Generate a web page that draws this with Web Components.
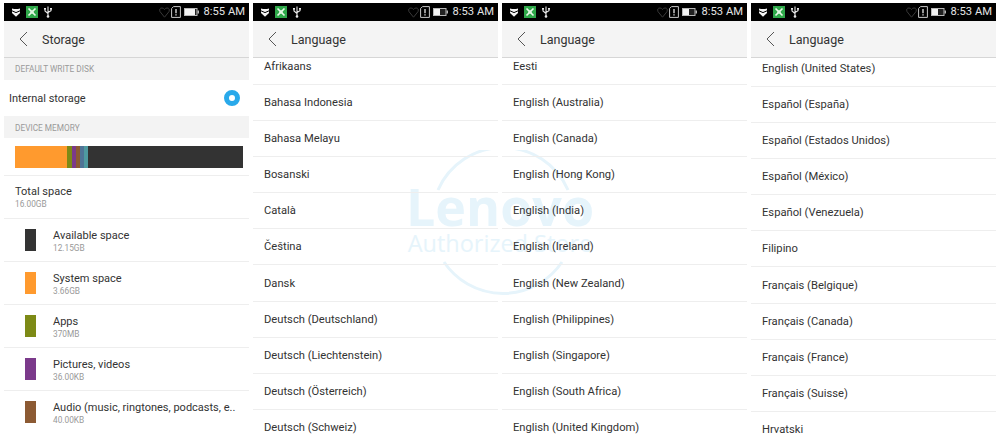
<!DOCTYPE html>
<html>
<head>
<meta charset="utf-8">
<title>Phone settings</title>
<style>
    html, body { margin: 0; height: 443px; overflow: hidden; background: #fff; }
    body { font-family: Roboto, "Noto Sans", sans-serif; color: #333; }
</style>
</head>
<body>
<x-gallery>
    <x-phone time="8:55 AM" heading="Storage" battery="10">
        <x-section-label>DEFAULT WRITE DISK</x-section-label>
        <x-radio-row>Internal storage</x-radio-row>
        <x-section-label style="padding-top: 2px; height: 20px">DEVICE MEMORY</x-section-label>
        <x-memory-bar></x-memory-bar>
        <x-total-row size="16.00GB">Total space</x-total-row>
        <x-storage-row size="12.15GB" color="#333333">Available space</x-storage-row>
        <x-storage-row size="3.66GB" color="#ff9a2e">System space</x-storage-row>
        <x-storage-row size="370MB" color="#7d8a16">Apps</x-storage-row>
        <x-storage-row size="36.00KB" color="#7b3a8b">Pictures, videos</x-storage-row>
        <x-storage-row size="40.00KB" color="#8c5a33">Audio (music, ringtones, podcasts, e..</x-storage-row>
    </x-phone>
    <x-phone time="8:53 AM" heading="Language" battery="6">
        <x-lang-list style="--scroll: -9.1px">
            <x-lang-row>Afrikaans</x-lang-row>
            <x-lang-row>Bahasa Indonesia</x-lang-row>
            <x-lang-row>Bahasa Melayu</x-lang-row>
            <x-lang-row>Bosanski</x-lang-row>
            <x-lang-row>Català</x-lang-row>
            <x-lang-row>Čeština</x-lang-row>
            <x-lang-row>Dansk</x-lang-row>
            <x-lang-row>Deutsch (Deutschland)</x-lang-row>
            <x-lang-row>Deutsch (Liechtenstein)</x-lang-row>
            <x-lang-row>Deutsch (Österreich)</x-lang-row>
            <x-lang-row>Deutsch (Schweiz)</x-lang-row>
        </x-lang-list>
    </x-phone>
    <x-phone time="8:53 AM" heading="Language" battery="6">
        <x-lang-list style="--scroll: -9.1px">
            <x-lang-row>Eesti</x-lang-row>
            <x-lang-row>English (Australia)</x-lang-row>
            <x-lang-row>English (Canada)</x-lang-row>
            <x-lang-row>English (Hong Kong)</x-lang-row>
            <x-lang-row>English (India)</x-lang-row>
            <x-lang-row>English (Ireland)</x-lang-row>
            <x-lang-row>English (New Zealand)</x-lang-row>
            <x-lang-row>English (Philippines)</x-lang-row>
            <x-lang-row>English (Singapore)</x-lang-row>
            <x-lang-row>English (South Africa)</x-lang-row>
            <x-lang-row>English (United Kingdom)</x-lang-row>
        </x-lang-list>
    </x-phone>
    <x-phone time="8:53 AM" heading="Language" battery="6">
        <x-lang-list style="--scroll: -7.1px">
            <x-lang-row>English (United States)</x-lang-row>
            <x-lang-row>Español (España)</x-lang-row>
            <x-lang-row>Español (Estados Unidos)</x-lang-row>
            <x-lang-row>Español (México)</x-lang-row>
            <x-lang-row>Español (Venezuela)</x-lang-row>
            <x-lang-row>Filipino</x-lang-row>
            <x-lang-row>Français (Belgique)</x-lang-row>
            <x-lang-row>Français (Canada)</x-lang-row>
            <x-lang-row>Français (France)</x-lang-row>
            <x-lang-row>Français (Suisse)</x-lang-row>
            <x-lang-row>Hrvatski</x-lang-row>
        </x-lang-list>
    </x-phone>
    <x-watermark></x-watermark>
</x-gallery>

<script>
    // small helper, every element here is just a shadow root with static markup
    class Base extends HTMLElement {
        constructor() {
            super();
            this.attachShadow({ mode: 'open' });
            this.shadowRoot.innerHTML = this.markup;
        }
    }

    customElements.define('x-gallery', class extends Base {
        get markup() {
            return /*html*/ `
            <style>
                :host { display: flex; gap: 4px; padding: 3px 0 0 4px; height: 440px; position: relative; overflow: hidden; background: #fff; }
            </style>
            <slot></slot>`;
        }
    });

    customElements.define('x-status-bar', class extends Base {
        update(time, battery) {
            this.shadowRoot.querySelector('.time').textContent = time;
            this.shadowRoot.querySelector('.level').setAttribute('width', battery);
        }
        get markup() {
            return /*html*/ `
            <style>
                :host { display: flex; align-items: center; height: 18px; background: #000; padding: 0 4px 0 8px; box-sizing: border-box; }
                svg { display: block; }
                .left { display: flex; align-items: center; gap: 6px; }
                .right { display: flex; align-items: center; margin-left: auto; }
                .time { color: #e4e4e4; font-size: 11.2px; margin-left: 5px; line-height: 18px; }
            </style>
            <div class="left">
                <svg width="8" height="9" viewBox="0 0 8 9"><path d="M0 0.4 Q4 1.6 8 0.4 V5 L4 8.8 L0 5Z" fill="#f4f4f4"/><path d="M0 2.8 L4 4.6 L8 2.8" fill="none" stroke="#000" stroke-width="1"/></svg>
                <svg width="12" height="12" viewBox="0 0 12 12"><rect width="12" height="12" fill="#2fa84a"/><path d="M2.5 2.5 L5 5 H7 L9.5 2.5 M2.5 9.5 L5 7 H7 L9.5 9.5 M5 5 V7 M7 5 V7" fill="none" stroke="#e8f8e8" stroke-width="1.7"/></svg>
                <svg width="8" height="12" viewBox="0 0 8 12"><path d="M4 0.5 V10.5 M1 3 V5 L4 7.5 M7 3 V4.6 L4 6.5" fill="none" stroke="#e8e8e8" stroke-width="1.1"/><circle cx="4" cy="10.5" r="1.3" fill="#e8e8e8"/><rect x="0" y="2" width="2" height="1.6" fill="#e8e8e8"/><rect x="6" y="2" width="2" height="1.6" fill="#e8e8e8"/></svg>
            </div>
            <div class="right">
                <svg width="11" height="11" viewBox="0 0 11 11" style="margin-right:1px"><path d="M5.5 10.2 L1 4.6 Q-0.2 1 3 1 Q4.8 1 5.5 2.6 Q6.2 1 8 1 Q11.2 1 10 4.6Z" fill="none" stroke="#383838" stroke-width="1"/></svg>
                <svg width="10" height="12" viewBox="0 0 10 12" style="margin-right:3px"><path d="M2.5 0.6 H9.4 V11.4 H0.6 V2.5Z" fill="none" stroke="#c8c8c8" stroke-width="1"/><path d="M5 3 V7.2 M5 8.2 V9.4" stroke="#e8e8e8" stroke-width="1.3"/></svg>
                <svg width="15" height="8" viewBox="0 0 15 8"><rect x="0.5" y="0.5" width="12.5" height="7" fill="#222" stroke="#b8b8b8"/><rect class="level" x="1" y="1" width="6" height="6" fill="#f4f4f4"/><rect x="13.5" y="2.5" width="1.5" height="3" fill="#b8b8b8"/></svg>
                <span class="time"></span>
            </div>`;
        }
    });

    customElements.define('x-app-header', class extends Base {
        update(heading) {
            this.shadowRoot.querySelector('.title').textContent = heading;
        }
        get markup() {
            return /*html*/ `
            <style>
                :host { display: flex; align-items: center; height: 37px; background: #f4f4f4; border-bottom: 1px solid #d6d6d6; box-sizing: border-box; padding-left: 15px; }
                svg { display: block; }
                .title { font-size: 12.5px; color: #333; margin-left: 14px; }
            </style>
            <svg width="9" height="16" viewBox="0 0 9 16"><path d="M8 1 L1 8 L8 15" fill="none" stroke="#555" stroke-width="1"/></svg>
            <span class="title"></span>`;
        }
    });

    customElements.define('x-phone', class extends Base {
        connectedCallback() {
            this.shadowRoot.querySelector('x-status-bar').update(this.getAttribute('time'), this.getAttribute('battery'));
            this.shadowRoot.querySelector('x-app-header').update(this.getAttribute('heading'));
        }
        get markup() {
            return /*html*/ `
            <style>
                :host { display: flex; flex-direction: column; flex: 0 0 245px; width: 245px; overflow: hidden; position: relative; z-index: 1; }
                .body { flex: 1; overflow: hidden; }
            </style>
            <x-status-bar></x-status-bar>
            <x-app-header></x-app-header>
            <div class="body"><slot></slot></div>`;
        }
    });

    customElements.define('x-section-label', class extends Base {
        get markup() {
            return /*html*/ `
            <style>
                :host { display: flex; align-items: center; height: 22px; background: #f3f3f3; padding-left: 11px; font-size: 8.3px; color: #9a9a9a; }
            </style>
            <slot></slot>`;
        }
    });

    customElements.define('x-radio-row', class extends Base {
        get markup() {
            return /*html*/ `
            <style>
                :host { display: flex; align-items: center; justify-content: space-between; height: 36px; padding: 0 9px 0 5px; font-size: 11px; color: #333; }
                i { display: block; width: 6px; height: 6px; border: 5px solid #29a9ea; border-radius: 50%; background: #fff; }
            </style>
            <span><slot></slot></span><i></i>`;
        }
    });

    customElements.define('x-memory-bar', class extends Base {
        get markup() {
            return /*html*/ `
            <style>
                :host { display: flex; height: 22px; margin: 8px 6px 7px 11px; }
                i { display: block; flex: none; }
            </style>
            <i style="width:52px;background:#ff9a2e"></i>
            <i style="width:5px;background:#7d8a16"></i>
            <i style="width:4px;background:#7b3a8b"></i>
            <i style="width:4px;background:#8c5a33"></i>
            <i style="width:4px;background:#4f7496"></i>
            <i style="width:4px;background:#4e9aa0"></i>
            <i style="flex:1;background:#333"></i>`;
        }
    });

    customElements.define('x-total-row', class extends Base {
        connectedCallback() {
            this.shadowRoot.querySelector('small').textContent = this.getAttribute('size');
        }
        get markup() {
            return /*html*/ `
            <style>
                :host { display: flex; flex-direction: column; justify-content: center; height: 42px; padding-left: 11px; border-top: 1px solid #eee; font-size: 11px; color: #333; }
                small { font-size: 8.3px; color: #999; margin-top: 1px; }
            </style>
            <span><slot></slot></span><small></small>`;
        }
    });

    customElements.define('x-storage-row', class extends Base {
        connectedCallback() {
            this.shadowRoot.querySelector('small').textContent = this.getAttribute('size');
            this.shadowRoot.querySelector('i').style.background = this.getAttribute('color');
        }
        get markup() {
            return /*html*/ `
            <style>
                :host { display: flex; align-items: center; height: 43px; box-sizing: border-box; padding-left: 21px; border-top: 1px solid #eee; font-size: 11px; color: #333; }
                i { display: block; width: 11px; height: 22px; margin-right: 17px; }
                div { display: flex; flex-direction: column; padding-top: 1px; }
                small { font-size: 8.3px; color: #999; margin-top: 1px; }
            </style>
            <i></i>
            <div><span><slot></slot></span><small></small></div>`;
        }
    });

    customElements.define('x-lang-list', class extends Base {
        get markup() {
            return /*html*/ `
            <style>
                :host { display: block; margin-top: var(--scroll, 0); }
            </style>
            <slot></slot>`;
        }
    });

    customElements.define('x-lang-row', class extends Base {
        get markup() {
            return /*html*/ `
            <style>
                :host { display: flex; align-items: center; height: 36.1px; box-sizing: border-box; padding-left: 11px; border-bottom: 1px solid #eee; font-size: 11.2px; color: #333; }
            </style>
            <slot></slot>`;
        }
    });

    // faint shop stamp, sits behind the phones' text
    customElements.define('x-watermark', class extends Base {
        get markup() {
            return /*html*/ `
            <style>
                :host { position: absolute; left: 405px; top: 150px; width: 190px; height: 146px; color: #e6f4fb; font-family: "Open Sans", sans-serif; text-align: center; z-index: 0; }
                svg { position: absolute; left: 25px; top: 0; }
                .brand { position: absolute; left: 0; right: 0; top: 26px; font-size: 52px; font-weight: 700; line-height: 60px; }
                .sub { position: absolute; left: 0; right: 0; top: 81px; font-size: 23.5px; line-height: 24px; white-space: nowrap; }
            </style>
            <svg width="146" height="146" viewBox="0 0 146 146"><path d="M8 40 A71 71 0 0 1 138 40 M14 112 A71 71 0 0 0 132 112" fill="none" stroke="currentColor" stroke-width="3"/></svg>
            <div class="brand">Lenovo</div>
            <div class="sub">Authorized Store</div>`;
        }
    });
</script>
</body>
</html>
